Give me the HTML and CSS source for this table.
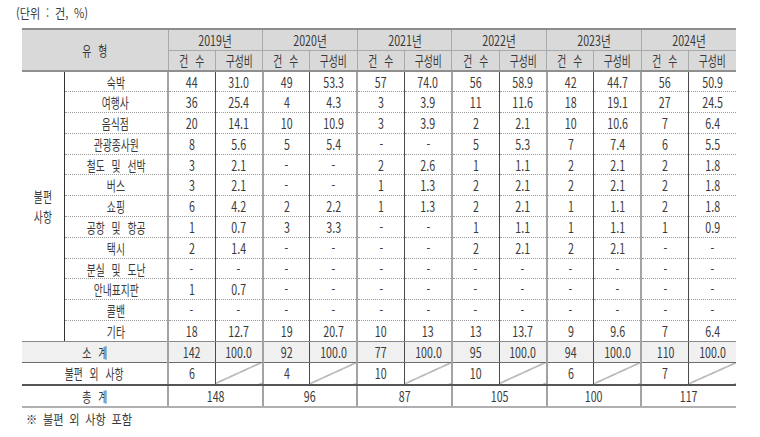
FILE: index.html
```html
<!DOCTYPE html>
<html lang="ko">
<head>
<meta charset="utf-8">
<title>불편 사항 현황</title>
<link rel="stylesheet" href="styles.css">
</head>
<body>
<div class="page">
  <p class="unit"><span class="s">(단위 : 건, %)</span></p>
  <table class="tbl">
    <colgroup>
      <col class="c-cat"><col class="c-item">
      <col class="c-n"><col class="c-n"><col class="c-n"><col class="c-n">
      <col class="c-n"><col class="c-n"><col class="c-n"><col class="c-n">
      <col class="c-n"><col class="c-n"><col class="c-n"><col class="c-n">
    </colgroup>
    <thead>
      <tr class="h1">
        <th colspan="2" rowspan="2" class="yr"><span class="s">유 형</span></th>
        <th colspan="2" class="yr"><span class="s">2019년</span></th>
        <th colspan="2" class="yr"><span class="s">2020년</span></th>
        <th colspan="2" class="yr"><span class="s">2021년</span></th>
        <th colspan="2" class="yr"><span class="s">2022년</span></th>
        <th colspan="2" class="yr"><span class="s">2023년</span></th>
        <th colspan="2"><span class="s">2024년</span></th>
      </tr>
      <tr class="h2">
        <th><span class="s">건 수</span></th><th class="yr"><span class="s">구성비</span></th>
        <th><span class="s">건 수</span></th><th class="yr"><span class="s">구성비</span></th>
        <th><span class="s">건 수</span></th><th class="yr"><span class="s">구성비</span></th>
        <th><span class="s">건 수</span></th><th class="yr"><span class="s">구성비</span></th>
        <th><span class="s">건 수</span></th><th class="yr"><span class="s">구성비</span></th>
        <th><span class="s">건 수</span></th><th><span class="s">구성비</span></th>
      </tr>
    </thead>
    <tbody>
      <tr>
        <td rowspan="13" class="cat"><span class="s">불편<br>사항</span></td>
        <td class="item"><span class="s">숙박</span></td>
        <td><span class="s">44</span></td><td class="yr"><span class="s">31.0</span></td>
        <td><span class="s">49</span></td><td class="yr"><span class="s">53.3</span></td>
        <td><span class="s">57</span></td><td class="yr"><span class="s">74.0</span></td>
        <td><span class="s">56</span></td><td class="yr"><span class="s">58.9</span></td>
        <td><span class="s">42</span></td><td class="yr"><span class="s">44.7</span></td>
        <td><span class="s">56</span></td><td><span class="s">50.9</span></td>
      </tr>
      <tr>
        <td class="item"><span class="s">여행사</span></td>
        <td><span class="s">36</span></td><td class="yr"><span class="s">25.4</span></td>
        <td><span class="s">4</span></td><td class="yr"><span class="s">4.3</span></td>
        <td><span class="s">3</span></td><td class="yr"><span class="s">3.9</span></td>
        <td><span class="s">11</span></td><td class="yr"><span class="s">11.6</span></td>
        <td><span class="s">18</span></td><td class="yr"><span class="s">19.1</span></td>
        <td><span class="s">27</span></td><td><span class="s">24.5</span></td>
      </tr>
      <tr>
        <td class="item"><span class="s">음식점</span></td>
        <td><span class="s">20</span></td><td class="yr"><span class="s">14.1</span></td>
        <td><span class="s">10</span></td><td class="yr"><span class="s">10.9</span></td>
        <td><span class="s">3</span></td><td class="yr"><span class="s">3.9</span></td>
        <td><span class="s">2</span></td><td class="yr"><span class="s">2.1</span></td>
        <td><span class="s">10</span></td><td class="yr"><span class="s">10.6</span></td>
        <td><span class="s">7</span></td><td><span class="s">6.4</span></td>
      </tr>
      <tr>
        <td class="item"><span class="s">관광종사원</span></td>
        <td><span class="s">8</span></td><td class="yr"><span class="s">5.6</span></td>
        <td><span class="s">5</span></td><td class="yr"><span class="s">5.4</span></td>
        <td><span class="s">-</span></td><td class="yr"><span class="s">-</span></td>
        <td><span class="s">5</span></td><td class="yr"><span class="s">5.3</span></td>
        <td><span class="s">7</span></td><td class="yr"><span class="s">7.4</span></td>
        <td><span class="s">6</span></td><td><span class="s">5.5</span></td>
      </tr>
      <tr>
        <td class="item"><span class="s">철도 및 선박</span></td>
        <td><span class="s">3</span></td><td class="yr"><span class="s">2.1</span></td>
        <td><span class="s">-</span></td><td class="yr"><span class="s">-</span></td>
        <td><span class="s">2</span></td><td class="yr"><span class="s">2.6</span></td>
        <td><span class="s">1</span></td><td class="yr"><span class="s">1.1</span></td>
        <td><span class="s">2</span></td><td class="yr"><span class="s">2.1</span></td>
        <td><span class="s">2</span></td><td><span class="s">1.8</span></td>
      </tr>
      <tr>
        <td class="item"><span class="s">버스</span></td>
        <td><span class="s">3</span></td><td class="yr"><span class="s">2.1</span></td>
        <td><span class="s">-</span></td><td class="yr"><span class="s">-</span></td>
        <td><span class="s">1</span></td><td class="yr"><span class="s">1.3</span></td>
        <td><span class="s">2</span></td><td class="yr"><span class="s">2.1</span></td>
        <td><span class="s">2</span></td><td class="yr"><span class="s">2.1</span></td>
        <td><span class="s">2</span></td><td><span class="s">1.8</span></td>
      </tr>
      <tr>
        <td class="item"><span class="s">쇼핑</span></td>
        <td><span class="s">6</span></td><td class="yr"><span class="s">4.2</span></td>
        <td><span class="s">2</span></td><td class="yr"><span class="s">2.2</span></td>
        <td><span class="s">1</span></td><td class="yr"><span class="s">1.3</span></td>
        <td><span class="s">2</span></td><td class="yr"><span class="s">2.1</span></td>
        <td><span class="s">1</span></td><td class="yr"><span class="s">1.1</span></td>
        <td><span class="s">2</span></td><td><span class="s">1.8</span></td>
      </tr>
      <tr>
        <td class="item"><span class="s">공항 및 항공</span></td>
        <td><span class="s">1</span></td><td class="yr"><span class="s">0.7</span></td>
        <td><span class="s">3</span></td><td class="yr"><span class="s">3.3</span></td>
        <td><span class="s">-</span></td><td class="yr"><span class="s">-</span></td>
        <td><span class="s">1</span></td><td class="yr"><span class="s">1.1</span></td>
        <td><span class="s">1</span></td><td class="yr"><span class="s">1.1</span></td>
        <td><span class="s">1</span></td><td><span class="s">0.9</span></td>
      </tr>
      <tr>
        <td class="item"><span class="s">택시</span></td>
        <td><span class="s">2</span></td><td class="yr"><span class="s">1.4</span></td>
        <td><span class="s">-</span></td><td class="yr"><span class="s">-</span></td>
        <td><span class="s">-</span></td><td class="yr"><span class="s">-</span></td>
        <td><span class="s">2</span></td><td class="yr"><span class="s">2.1</span></td>
        <td><span class="s">2</span></td><td class="yr"><span class="s">2.1</span></td>
        <td><span class="s">-</span></td><td><span class="s">-</span></td>
      </tr>
      <tr>
        <td class="item"><span class="s">분실 및 도난</span></td>
        <td><span class="s">-</span></td><td class="yr"><span class="s">-</span></td>
        <td><span class="s">-</span></td><td class="yr"><span class="s">-</span></td>
        <td><span class="s">-</span></td><td class="yr"><span class="s">-</span></td>
        <td><span class="s">-</span></td><td class="yr"><span class="s">-</span></td>
        <td><span class="s">-</span></td><td class="yr"><span class="s">-</span></td>
        <td><span class="s">-</span></td><td><span class="s">-</span></td>
      </tr>
      <tr>
        <td class="item"><span class="s">안내표지판</span></td>
        <td><span class="s">1</span></td><td class="yr"><span class="s">0.7</span></td>
        <td><span class="s">-</span></td><td class="yr"><span class="s">-</span></td>
        <td><span class="s">-</span></td><td class="yr"><span class="s">-</span></td>
        <td><span class="s">-</span></td><td class="yr"><span class="s">-</span></td>
        <td><span class="s">-</span></td><td class="yr"><span class="s">-</span></td>
        <td><span class="s">-</span></td><td><span class="s">-</span></td>
      </tr>
      <tr>
        <td class="item"><span class="s">콜밴</span></td>
        <td><span class="s">-</span></td><td class="yr"><span class="s">-</span></td>
        <td><span class="s">-</span></td><td class="yr"><span class="s">-</span></td>
        <td><span class="s">-</span></td><td class="yr"><span class="s">-</span></td>
        <td><span class="s">-</span></td><td class="yr"><span class="s">-</span></td>
        <td><span class="s">-</span></td><td class="yr"><span class="s">-</span></td>
        <td><span class="s">-</span></td><td><span class="s">-</span></td>
      </tr>
      <tr class="last">
        <td class="item"><span class="s">기타</span></td>
        <td><span class="s">18</span></td><td class="yr"><span class="s">12.7</span></td>
        <td><span class="s">19</span></td><td class="yr"><span class="s">20.7</span></td>
        <td><span class="s">10</span></td><td class="yr"><span class="s">13</span></td>
        <td><span class="s">13</span></td><td class="yr"><span class="s">13.7</span></td>
        <td><span class="s">9</span></td><td class="yr"><span class="s">9.6</span></td>
        <td><span class="s">7</span></td><td><span class="s">6.4</span></td>
      </tr>
      <tr class="sub">
        <td colspan="2" class="yr lbl"><span class="s">소 계</span></td>
        <td><span class="s">142</span></td><td class="yr"><span class="s">100.0</span></td>
        <td><span class="s">92</span></td><td class="yr"><span class="s">100.0</span></td>
        <td><span class="s">77</span></td><td class="yr"><span class="s">100.0</span></td>
        <td><span class="s">95</span></td><td class="yr"><span class="s">100.0</span></td>
        <td><span class="s">94</span></td><td class="yr"><span class="s">100.0</span></td>
        <td><span class="s">110</span></td><td><span class="s">100.0</span></td>
      </tr>
      <tr class="other">
        <td colspan="2" class="yr lbl"><span class="s">불편 외 사항</span></td>
        <td><span class="s">6</span></td><td class="yr diag"></td>
        <td><span class="s">4</span></td><td class="yr diag"></td>
        <td><span class="s">10</span></td><td class="yr diag"></td>
        <td><span class="s">10</span></td><td class="yr diag"></td>
        <td><span class="s">6</span></td><td class="yr diag"></td>
        <td><span class="s">7</span></td><td class="diag"></td>
      </tr>
      <tr class="total">
        <td colspan="2" class="yr lbl"><span class="s">총 계</span></td>
        <td colspan="2" class="yr"><span class="s">148</span></td>
        <td colspan="2" class="yr"><span class="s">96</span></td>
        <td colspan="2" class="yr"><span class="s">87</span></td>
        <td colspan="2" class="yr"><span class="s">105</span></td>
        <td colspan="2" class="yr"><span class="s">100</span></td>
        <td colspan="2"><span class="s">117</span></td>
      </tr>
    </tbody>
  </table>
  <p class="note"><span class="s">※ 불편 외 사항 포함</span></p>
</div>
</body>
</html>
```

FILE: styles.css
```css
* { box-sizing: border-box; }

body {
  margin: 0;
  background: #fff;
  font-family: "Noto Sans CJK KR", "Noto Sans", sans-serif;
  color: #3a3a3a;
}

.page {
  padding-top: 4px;
}

.s {
  display: inline-block;
  transform: scaleX(0.7);
  white-space: nowrap;
  word-spacing: 6px;
}

.unit {
  margin: 0 0 0 16px;
  height: 24px;
  font-size: 13px;
  line-height: 17px;
}
.unit .s {
  transform: scaleX(0.86);
  transform-origin: left center;
  word-spacing: 3px;
}

.tbl {
  margin-left: 22px;
  width: 714px;
  table-layout: fixed;
  border-collapse: collapse;
  font-size: 14px;
  line-height: 16px;
  text-align: center;
}

/* numeric cells and year headings are a little wider than the Korean labels */
.tbl tbody td:not(.item):not(.cat):not(.lbl) .s,
.tbl thead tr.h1 th:not([rowspan]) .s {
  transform: scaleX(0.76);
}

.c-cat { width: 42px; }
.c-item { width: 104px; }
.c-n { width: 47.33px; }

.tbl th,
.tbl td {
  padding: 0;
  font-weight: normal;
  vertical-align: middle;
}

/* header */
.tbl thead th {
  background: #d9d9d9;
  height: 21px;
  border-left: 1px solid #a9a9a9;
}
.tbl thead th:first-child { border-left: none; }
.tbl thead tr.h1 th { border-top: 2px solid #8c8c8c; }
.tbl thead tr.h2 th { border-top: 1px solid #a9a9a9; border-bottom: 2px solid #8f8f8f; }
.tbl thead tr.h1 th[rowspan] { border-bottom: 2px solid #8f8f8f; }
.tbl thead tr.h2 th:first-child { border-left: 1px solid #a9a9a9; }

/* body */
.tbl tbody td {
  height: 20.8px;
  border-left: 1px solid #4a4a4a;
  border-bottom: 1px dotted #9a9a9a;
}
.tbl tbody td.yr + td,
.tbl tbody td.item + td { border-left: 2px solid #a3a3a3; }

.tbl tbody td.cat {
  border-left: none;
  border-bottom: 1px solid #8a8a8a;
  line-height: 20px;
}
.tbl tbody td.item { border-left: 1px solid #333; }

.tbl tbody tr.last td { border-bottom: 1px solid #8a8a8a; }

.tbl tbody tr.sub td {
  background: #f0f0f0;
  border-bottom: 1px solid #6e6e6e;
}
.tbl tbody tr.sub td:first-child,
.tbl tbody tr.other td:first-child,
.tbl tbody tr.total td:first-child { border-left: none; }

.tbl tbody tr.other td { border-bottom: 2px solid #555; height: 23px; }

.tbl tbody tr.total td {
  height: 22px;
  border-bottom: 2px solid #b0b0b0;
}

.diag {
  background: linear-gradient(to top left,
    transparent calc(50% - 0.7px),
    #555 50%,
    transparent calc(50% + 0.7px));
}

.note {
  margin: 3px 0 0 26px;
  font-size: 13px;
  line-height: 16px;
}
.note .s {
  transform: scaleX(0.86);
  transform-origin: left center;
  word-spacing: 3px;
}
```
